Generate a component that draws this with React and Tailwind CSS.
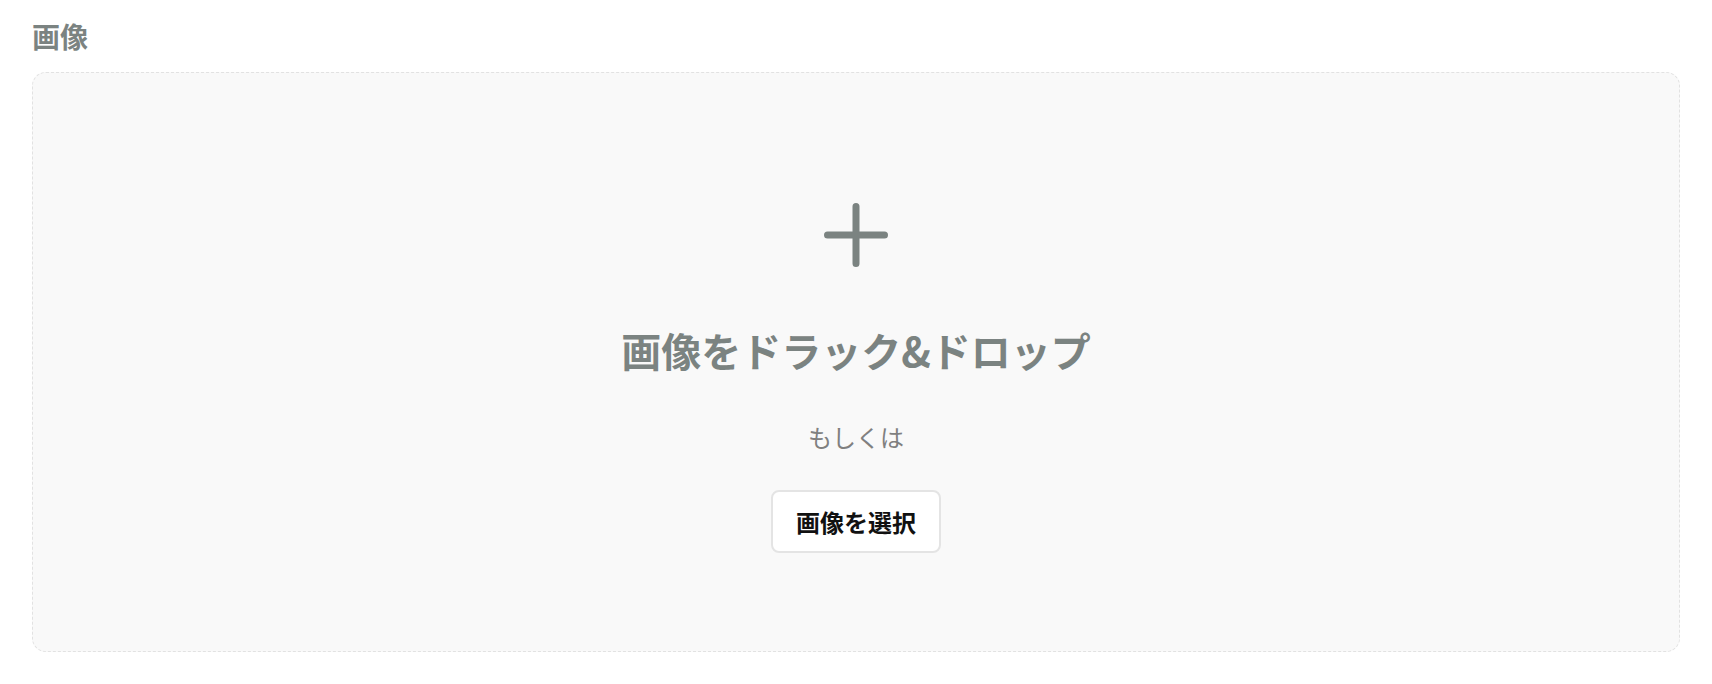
export default function App() {
  return (
    <div
      className="min-h-screen bg-white px-8 pt-4"
      style={{ fontFamily: '"Noto Sans CJK JP", "Noto Sans", sans-serif' }}
    >
      <h2 className="mb-4 text-[28px] leading-[40px] font-bold text-[#7b8381]">画像</h2>

      {/* drop zone */}
      <div className="flex h-[580px] flex-col items-center rounded-[14px] border border-dashed border-[#e2e2e2] bg-[#f9f9f9] pt-[130px]">
        <svg width="64" height="64" viewBox="0 0 64 64" fill="none" className="text-[#7b8381]">
          <path d="M32 3.5v57M3.5 32h57" stroke="currentColor" strokeWidth="7" strokeLinecap="round" />
        </svg>

        <p className="mt-[53px] text-[40px] leading-[60px] font-bold text-[#7b8381]">
          画像をドラック&ドロップ
        </p>

        <p className="mt-[39px] text-2xl leading-9 text-[#808080]">もしくは</p>

        <button className="mt-[35px] h-[63px] w-[170px] rounded-lg border-2 border-[#e4e4e4] bg-white text-2xl font-bold text-[#111]">
          画像を選択
        </button>
      </div>
    </div>
  )
}
